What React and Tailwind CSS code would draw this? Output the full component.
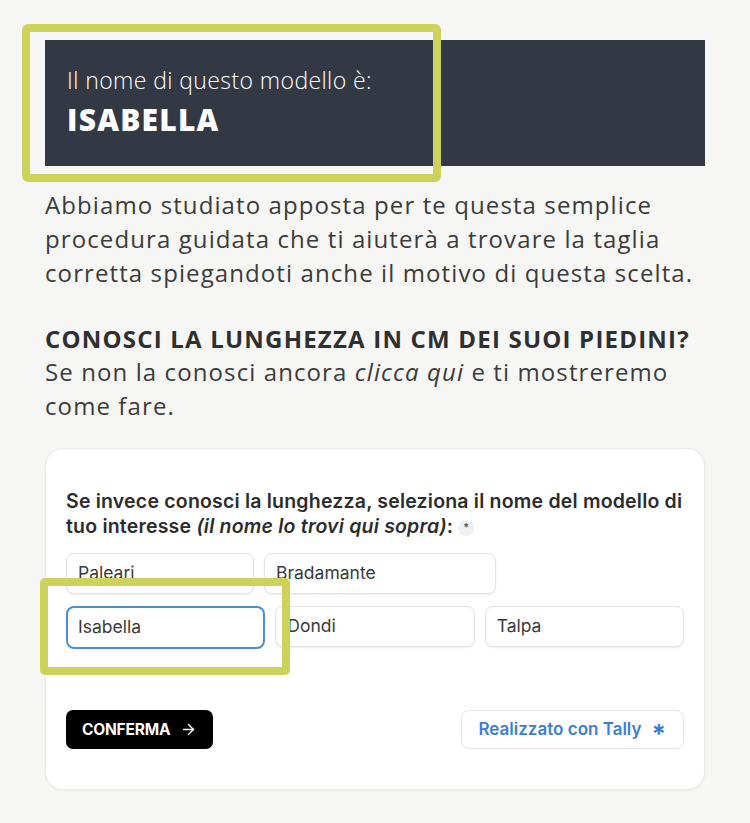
import { ArrowRight } from "lucide-react";

const options = [
  [
    { label: "Paleari", w: "w-[188px]" },
    { label: "Bradamante", w: "w-[232px]" },
  ],
  [
    { label: "Isabella", w: "w-[201px]", selected: true },
    { label: "Dondi", w: "w-[201px]" },
    { label: "Talpa", w: "w-[201px]" },
  ],
];

function Option({ label, w, selected }) {
  return (
    <div
      className={
        selected
          ? `${w} h-[43px] flex items-center px-[10px] rounded-[8px] border-2 border-[#4a8fdc] bg-white text-[17.5px] text-[#3a3a3a]`
          : `${w} h-[41px] flex items-center px-[11px] rounded-[8px] border border-[#e3e3e3] bg-white shadow-[0_1px_2px_rgba(0,0,0,0.08)] text-[17.5px] text-[#3a3a3a]`
      }
    >
      {label}
    </div>
  );
}

function App() {
  return (
    <div className="relative min-h-screen bg-[#f6f6f4] px-[45px] pt-[40px] pb-[32px] font-['Open_Sans',sans-serif]">
      {/* highlight frames */}
      <div className="absolute left-[22px] top-[24px] w-[419px] h-[158px] border-[8px] border-[#ccd25a] rounded-[6px] z-10" />
      <div className="absolute left-[40px] top-[578px] w-[250px] h-[97px] border-[8px] border-[#ccd25a] rounded-[5px] z-10" />

      <div className="bg-[#333845] h-[126px] px-[22px] pt-[25px]">
        <p className="text-white text-[23px] font-light tracking-[0.4px] leading-[30px]">
          Il nome di questo modello è:
        </p>
        <p className="text-white text-[30px] font-extrabold leading-[38px] mt-[6px] tracking-[1.2px]">ISABELLA</p>
      </div>

      <p className="mt-[22px] text-[24px] leading-[34px] text-[#3b3b3b] tracking-[1.1px]">
        Abbiamo studiato apposta per te questa semplice procedura guidata che ti aiuterà a trovare la taglia
        corretta spiegandoti anche il motivo di questa scelta.
      </p>

      <h2 className="mt-[32px] text-[24px] font-bold leading-[33px] text-[#2f2f2f] tracking-[1.2px]">
        CONOSCI LA LUNGHEZZA IN CM DEI SUOI PIEDINI?
      </h2>
      <p className="text-[24px] leading-[34px] text-[#3b3b3b] tracking-[1.1px]">
        Se non la conosci ancora <em>clicca qui</em> e ti mostreremo come fare.
      </p>

      <div className="mt-[25px] bg-white rounded-[18px] border border-[#ebebeb] shadow-[0_1px_3px_rgba(0,0,0,0.04)] px-[20px] pt-[40px] pb-[40px] font-['Inter',sans-serif]">
        <p className="text-[19.5px] font-semibold leading-[25px] text-[#2c2c2c] tracking-[0.2px]">
          Se invece conosci la lunghezza, seleziona il nome del modello di tuo interesse{" "}
          <em>(il nome lo trovi qui sopra)</em>:{" "}
          <span className="inline-flex items-center justify-center w-[16px] h-[16px] rounded-full bg-[#f0f0f0] text-[11px] align-middle text-[#555]">
            *
          </span>
        </p>

        <div className="mt-[14px] flex flex-col gap-[12px]">
          {options.map((row, i) => (
            <div key={i} className="flex gap-[10px]">
              {row.map((o) => (
                <Option key={o.label} {...o} />
              ))}
            </div>
          ))}
        </div>

        <div className="mt-[61px] flex items-center justify-between">
          <button className="flex items-center gap-[10px] h-[39px] px-[16px] rounded-[7px] bg-black text-white text-[15.5px] font-bold tracking-[-0.2px]">
            CONFERMA
            <ArrowRight size={17} strokeWidth={2} />
          </button>
          <div className="flex items-center gap-[10px] h-[39px] px-[17px] rounded-[8px] border border-[#e6e6e6] bg-white text-[17px] font-semibold text-[#3a7fd5]">
            Realizzato con Tally
            <span className="text-[26px] leading-none font-bold mt-[9px]">*</span>
          </div>
        </div>
      </div>
    </div>
  );
}

export default App;
